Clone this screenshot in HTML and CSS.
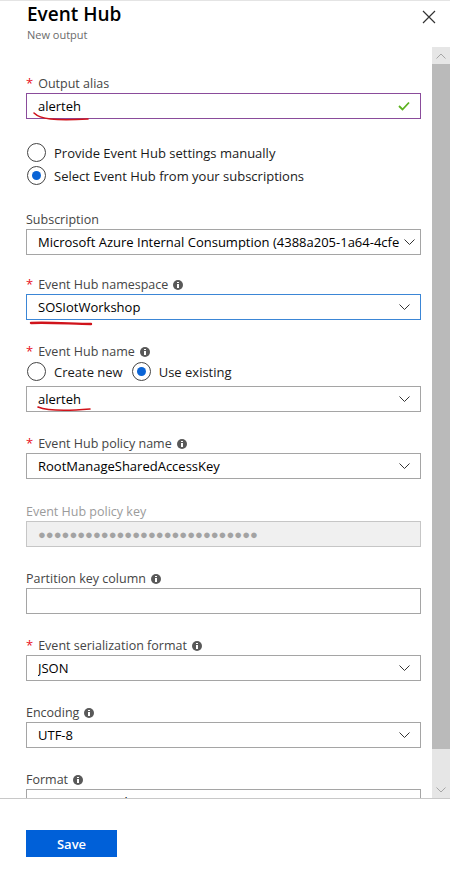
FILE: index.html
```html
<!DOCTYPE html>
<html>
  <head>
    <title>Event Hub - New output</title>
    <link rel="stylesheet" href="styles.css">
  </head>
  <body>
    <div class="blade">
      <header class="blade-header">
        <div class="titles">
          <h1>Event Hub</h1>
          <div class="subtitle">New output</div>
        </div>
        <button class="close" aria-label="Close">
          <svg width="14" height="14" viewBox="0 0 14 14">
            <path d="M1 1 L13 13 M13 1 L1 13" stroke="#333" stroke-width="1.2" fill="none" />
          </svg>
        </button>
      </header>

      <div class="blade-body">
        <form class="blade-content">
          <!-- Output alias -->
          <div class="field">
            <div class="field-label"><span class="req">*</span>Output alias</div>
            <div class="control control-valid">
              <span class="value">alerteh</span>
              <svg class="check" width="12" height="10" viewBox="0 0 12 10">
                <path d="M1 5 L4.5 8.5 L11 1.5" stroke="#5cb21f" stroke-width="1.8" fill="none" />
              </svg>
            </div>
            <svg class="scribble scribble-alias" width="70" height="12" viewBox="0 0 70 12">
              <path d="M2 2 C8 8, 22 10, 56 8" stroke="#d0131b" stroke-width="1.6" fill="none" stroke-linecap="round" />
            </svg>
          </div>

          <div class="radio-group">
            <label class="radio"><span class="dot"></span>Provide Event Hub settings manually</label>
            <label class="radio"><span class="dot checked"></span>Select Event Hub from your subscriptions</label>
          </div>

          <!-- Subscription -->
          <div class="field field-tight">
            <div class="field-label">Subscription</div>
            <div class="control select">
              <span class="value clip">Microsoft Azure Internal Consumption (4388a205-1a64-4cfe</span>
              <svg class="chevron" width="11" height="6" viewBox="0 0 11 6"><path d="M0.5 0.5 L5.5 5.5 L10.5 0.5" stroke="#333" fill="none" /></svg>
            </div>
          </div>

          <!-- Namespace -->
          <div class="field">
            <div class="field-label"><span class="req">*</span>Event Hub namespace<span class="info"></span></div>
            <div class="control select control-focus">
              <span class="value">SOSIotWorkshop</span>
              <svg class="chevron" width="11" height="6" viewBox="0 0 11 6"><path d="M0.5 0.5 L5.5 5.5 L10.5 0.5" stroke="#333" fill="none" /></svg>
            </div>
            <svg class="scribble scribble-ns" width="70" height="10" viewBox="0 0 70 10">
              <path d="M2 3 C20 2, 45 4, 62 4" stroke="#d0131b" stroke-width="2.4" fill="none" stroke-linecap="round" />
            </svg>
          </div>

          <!-- Event Hub name -->
          <div class="field">
            <div class="field-label"><span class="req">*</span>Event Hub name<span class="info"></span></div>
            <div class="radio-row">
              <label class="radio"><span class="dot"></span>Create new</label>
              <label class="radio"><span class="dot checked"></span>Use existing</label>
            </div>
            <div class="control select">
              <span class="value">alerteh</span>
              <svg class="chevron" width="11" height="6" viewBox="0 0 11 6"><path d="M0.5 0.5 L5.5 5.5 L10.5 0.5" stroke="#333" fill="none" /></svg>
            </div>
            <svg class="scribble scribble-name" width="70" height="10" viewBox="0 0 70 10">
              <path d="M2 2 C12 6, 30 6, 54 4" stroke="#d0131b" stroke-width="1.6" fill="none" stroke-linecap="round" />
            </svg>
          </div>

          <!-- Policy name -->
          <div class="field field-loose">
            <div class="field-label"><span class="req">*</span>Event Hub policy name<span class="info"></span></div>
            <div class="control select">
              <span class="value">RootManageSharedAccessKey</span>
              <svg class="chevron" width="11" height="6" viewBox="0 0 11 6"><path d="M0.5 0.5 L5.5 5.5 L10.5 0.5" stroke="#333" fill="none" /></svg>
            </div>
          </div>

          <!-- Policy key -->
          <div class="field">
            <div class="field-label disabled">Event Hub policy key</div>
            <div class="control control-disabled">
              <span class="value dots">●●●●●●●●●●●●●●●●●●●●●●●●●●●●</span>
            </div>
          </div>

          <!-- Partition key -->
          <div class="field">
            <div class="field-label">Partition key column<span class="info"></span></div>
            <div class="control"></div>
          </div>

          <!-- Serialization -->
          <div class="field">
            <div class="field-label"><span class="req">*</span>Event serialization format<span class="info"></span></div>
            <div class="control select">
              <span class="value">JSON</span>
              <svg class="chevron" width="11" height="6" viewBox="0 0 11 6"><path d="M0.5 0.5 L5.5 5.5 L10.5 0.5" stroke="#333" fill="none" /></svg>
            </div>
          </div>

          <!-- Encoding -->
          <div class="field">
            <div class="field-label">Encoding<span class="info"></span></div>
            <div class="control select">
              <span class="value">UTF-8</span>
              <svg class="chevron" width="11" height="6" viewBox="0 0 11 6"><path d="M0.5 0.5 L5.5 5.5 L10.5 0.5" stroke="#333" fill="none" /></svg>
            </div>
          </div>

          <!-- Format -->
          <div class="field">
            <div class="field-label">Format<span class="info"></span></div>
            <div class="control select">
              <span class="value">Line separated</span>
              <svg class="chevron" width="11" height="6" viewBox="0 0 11 6"><path d="M0.5 0.5 L5.5 5.5 L10.5 0.5" stroke="#333" fill="none" /></svg>
            </div>
          </div>
        </form>

        <div class="scrollbar">
          <div class="sb-btn">
            <svg width="10" height="6" viewBox="0 0 10 6"><path d="M0.5 5.5 L5 1 L9.5 5.5" stroke="#a6a6a6" fill="none" /></svg>
          </div>
          <div class="sb-thumb"></div>
          <div class="sb-track"></div>
          <div class="sb-btn">
            <svg width="10" height="6" viewBox="0 0 10 6"><path d="M0.5 0.5 L5 5 L9.5 0.5" stroke="#a6a6a6" fill="none" /></svg>
          </div>
        </div>
      </div>

      <footer class="blade-footer">
        <button class="save-button">Save</button>
      </footer>
    </div>
  </body>
</html>
```

FILE: styles.css
```css
/* page */
body {
  margin: 0;
  padding: 0;
  font-family: "Segoe UI", "Open Sans", sans-serif;
  font-size: 12.5px;
  color: #000;
  background-color: #fff;
}
.blade {
  width: 450px;
  height: 881px;
  display: flex;
  flex-direction: column;
  border-top: 1px solid #e4e4e4;
  box-sizing: border-box;
}

/* header */
.blade-header {
  height: 46px;
  display: flex;
  justify-content: space-between;
  padding-left: 27px;
  flex-shrink: 0;
}
.blade-header h1 {
  margin: 0;
  font-size: 19px;
  font-weight: 600;
  line-height: 24px;
  padding-top: 1px;
}
.subtitle {
  font-size: 11px;
  color: #6b6b6b;
  line-height: 14px;
  margin-top: 2px;
}
.close {
  border: none;
  background: none;
  padding: 0;
  width: 24px;
  height: 24px;
  margin: 4px 9px 0 0;
  display: flex;
  align-items: center;
  justify-content: center;
}

/* scroll area */
.blade-body {
  flex: 1;
  display: flex;
  overflow: hidden;
  min-height: 0;
}
.blade-content {
  flex: 1;
  padding: 28px 11px 0 26px;
  overflow: hidden;
}
.scrollbar {
  width: 18px;
  display: flex;
  flex-direction: column;
  flex-shrink: 0;
}
.sb-btn {
  height: 17px;
  flex-shrink: 0;
  background-color: #e6e6e6;
  display: flex;
  align-items: center;
  justify-content: center;
}
.sb-thumb {
  height: 685px;
  flex-shrink: 0;
  background-color: #bababa;
}
.sb-track {
  flex: 1;
  background-color: #e6e6e6;
}

/* fields */
.field {
  position: relative;
  margin-bottom: 23px;
}
.field-tight {
  margin-bottom: 21px;
}
.field-loose {
  margin-bottom: 24px;
}
.field-label {
  line-height: 17px;
  margin-bottom: 1px;
  color: #454545;
  display: flex;
  align-items: center;
}
.field-label.disabled {
  color: #9b9b9b;
}
.req {
  color: #e81123;
  margin-right: 5px;
  font-size: 13px;
}
.info {
  display: inline-block;
  width: 10px;
  height: 10px;
  border-radius: 50%;
  background-color: #595959;
  margin-left: 5px;
  position: relative;
}
.info::before {
  content: "";
  position: absolute;
  left: 4px;
  top: 4px;
  width: 2px;
  height: 4px;
  background: #fff;
}
.info::after {
  content: "";
  position: absolute;
  left: 4px;
  top: 2px;
  width: 2px;
  height: 1px;
  background: #fff;
}
.control {
  height: 26px;
  box-sizing: border-box;
  border: 1px solid #a5a5a5;
  display: flex;
  align-items: center;
  padding: 0 10px 0 11px;
  background-color: #fff;
}
.control .value {
  flex: 1;
  font-size: 13px;
  white-space: nowrap;
  overflow: hidden;
}
.control .value.clip {
  flex: none;
  width: 364px;
  margin-right: 2px;
}
.control-valid {
  border-color: #8a4c9b;
}
.control-focus {
  border-color: #3b86d6;
}
.control-disabled {
  background-color: #f0f0f0;
  border-color: #c6c6c6;
}
.dots {
  color: #a3a3a3;
  font-size: 7px;
  letter-spacing: 0;
}
.chevron {
  flex-shrink: 0;
}
.scribble {
  position: absolute;
}
.scribble-alias {
  left: 6px;
  top: 36px;
}
.scribble-ns {
  left: 3px;
  top: 44px;
}
.scribble-name {
  left: 10px;
  top: 62px;
}

/* radios */
.radio-group {
  display: flex;
  flex-direction: column;
  gap: 2px;
  margin-bottom: 25px;
}
.radio-row {
  display: flex;
  gap: 8px;
  margin-bottom: 4px;
}
.radio {
  display: flex;
  align-items: center;
  height: 21px;
  font-size: 13px;
  color: #1a1a1a;
}
.dot {
  width: 19px;
  height: 19px;
  box-sizing: border-box;
  border: 1px solid #444;
  border-radius: 50%;
  margin: 0 8px 0 1px;
  display: flex;
  align-items: center;
  justify-content: center;
}
.dot.checked::after {
  content: "";
  width: 9px;
  height: 9px;
  border-radius: 50%;
  background-color: #0a64d6;
}

/* footer */
.blade-footer {
  height: 83px;
  box-sizing: border-box;
  border-top: 1px solid #c8c8c8;
  padding: 31px 0 0 26px;
  flex-shrink: 0;
}
.save-button {
  width: 91px;
  height: 27px;
  border: none;
  background-color: #0060d8;
  color: #fff;
  font-family: "Segoe UI", "Open Sans", sans-serif;
  font-size: 13px;
  font-weight: 600;
  cursor: pointer;
}
```
